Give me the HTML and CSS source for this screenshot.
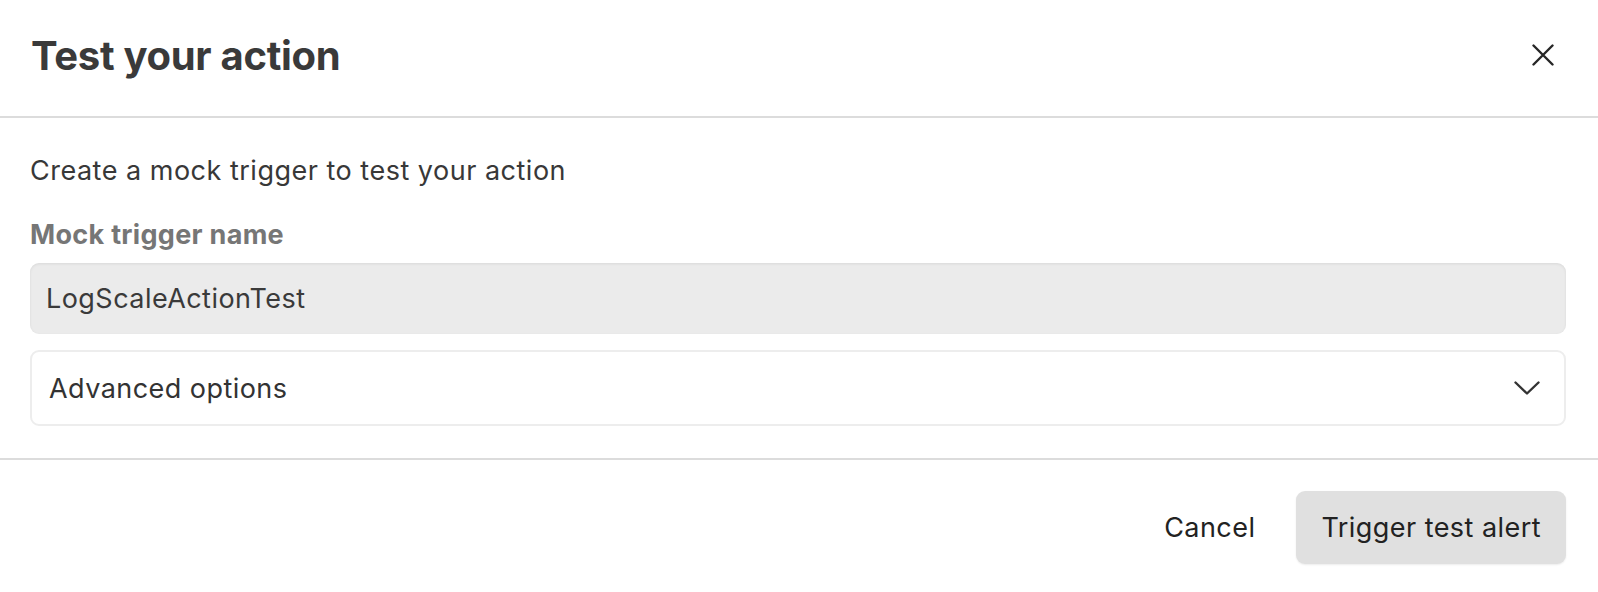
FILE: index.html
```html
<!DOCTYPE html>
<html>
<head>
<meta charset="utf-8">
<link rel="stylesheet" href="styles.css">
</head>
<body>
<div class="modal">
  <header class="header">
    <h1 class="title">Test your action</h1>
    <button class="close" aria-label="Close">
      <svg width="22" height="22" viewBox="0 0 22 22"><path d="M1.5 1.5 L20.5 20.5 M20.5 1.5 L1.5 20.5" stroke="#262626" stroke-width="2.4" stroke-linecap="round" fill="none"/></svg>
    </button>
  </header>
  <section class="body">
    <p class="intro">Create a mock trigger to test your action</p>
    <label class="label">Mock trigger name</label>
    <div class="input">LogScaleActionTest</div>
    <div class="accordion">
      <span>Advanced options</span>
      <svg width="26" height="14" viewBox="0 0 26 14"><path d="M1.5 1.5 L13 12.5 L24.5 1.5" stroke="#333" stroke-width="2.4" stroke-linecap="round" stroke-linejoin="round" fill="none"/></svg>
    </div>
  </section>
  <footer class="footer">
    <button class="btn-cancel">Cancel</button>
    <button class="btn-primary">Trigger test alert</button>
  </footer>
</div>
</body>
</html>
```
FILE: styles.css
```css
* { box-sizing: border-box; }
html, body { margin: 0; padding: 0; background: #fff; }
body { font-family: Inter, "Noto Sans", sans-serif; color: #333; }
.modal { width: 1598px; height: 592px; background: #fff; }
.header {
  height: 118px;
  padding: 0 44px 0 31px;
  display: flex;
  align-items: center;
  justify-content: space-between;
  border-bottom: 2px solid #dcdcdc;
}
.title { margin: 0; font-size: 40px; font-weight: 700; color: #3a3a3a; letter-spacing: -0.3px; position: relative; top: -3px; }
.close { border: 0; background: none; padding: 0; width: 22px; height: 22px; display: flex; cursor: pointer; position: relative; top: -3px; }
.body { padding: 37px 32px 32px 30px; border-bottom: 2px solid #dcdcdc; }
.intro { margin: 0; font-size: 27px; letter-spacing: 0.5px; line-height: 32px; color: #383838; }
.label { display: block; margin-top: 32px; font-size: 27px; letter-spacing: 0.3px; font-weight: 700; line-height: 32px; color: #767676; }
.input {
  margin-top: 12px;
  height: 71px;
  background: #ebebeb;
  border-radius: 9px;
  box-shadow: inset 0 1px 3px rgba(0,0,0,0.08);
  display: flex;
  align-items: center;
  padding-left: 16px;
  font-size: 27px;
  letter-spacing: 0.45px;
  color: #3a3a3a;
}
.accordion {
  margin-top: 16px;
  height: 76px;
  border: 2px solid #ededed;
  border-radius: 9px;
  display: flex;
  align-items: center;
  justify-content: space-between;
  padding: 0 24px 0 17px;
  font-size: 27px;
  letter-spacing: 0.45px;
  color: #333;
}
.footer {
  display: flex;
  justify-content: flex-end;
  align-items: center;
  gap: 41px;
  padding: 31px 32px 0 0;
}
.btn-cancel { border: 0; background: none; font-family: inherit; font-size: 27px; letter-spacing: 0.45px; color: #222; padding: 0; }
.btn-primary {
  border: 0;
  height: 73px;
  padding: 0 25px;
  border-radius: 9px;
  background: #e0e0e0;
  font-family: inherit;
  font-size: 27px;
  letter-spacing: 0.45px;
  color: #222;
  box-shadow: 0 1px 2px rgba(0,0,0,0.08);
}
```
